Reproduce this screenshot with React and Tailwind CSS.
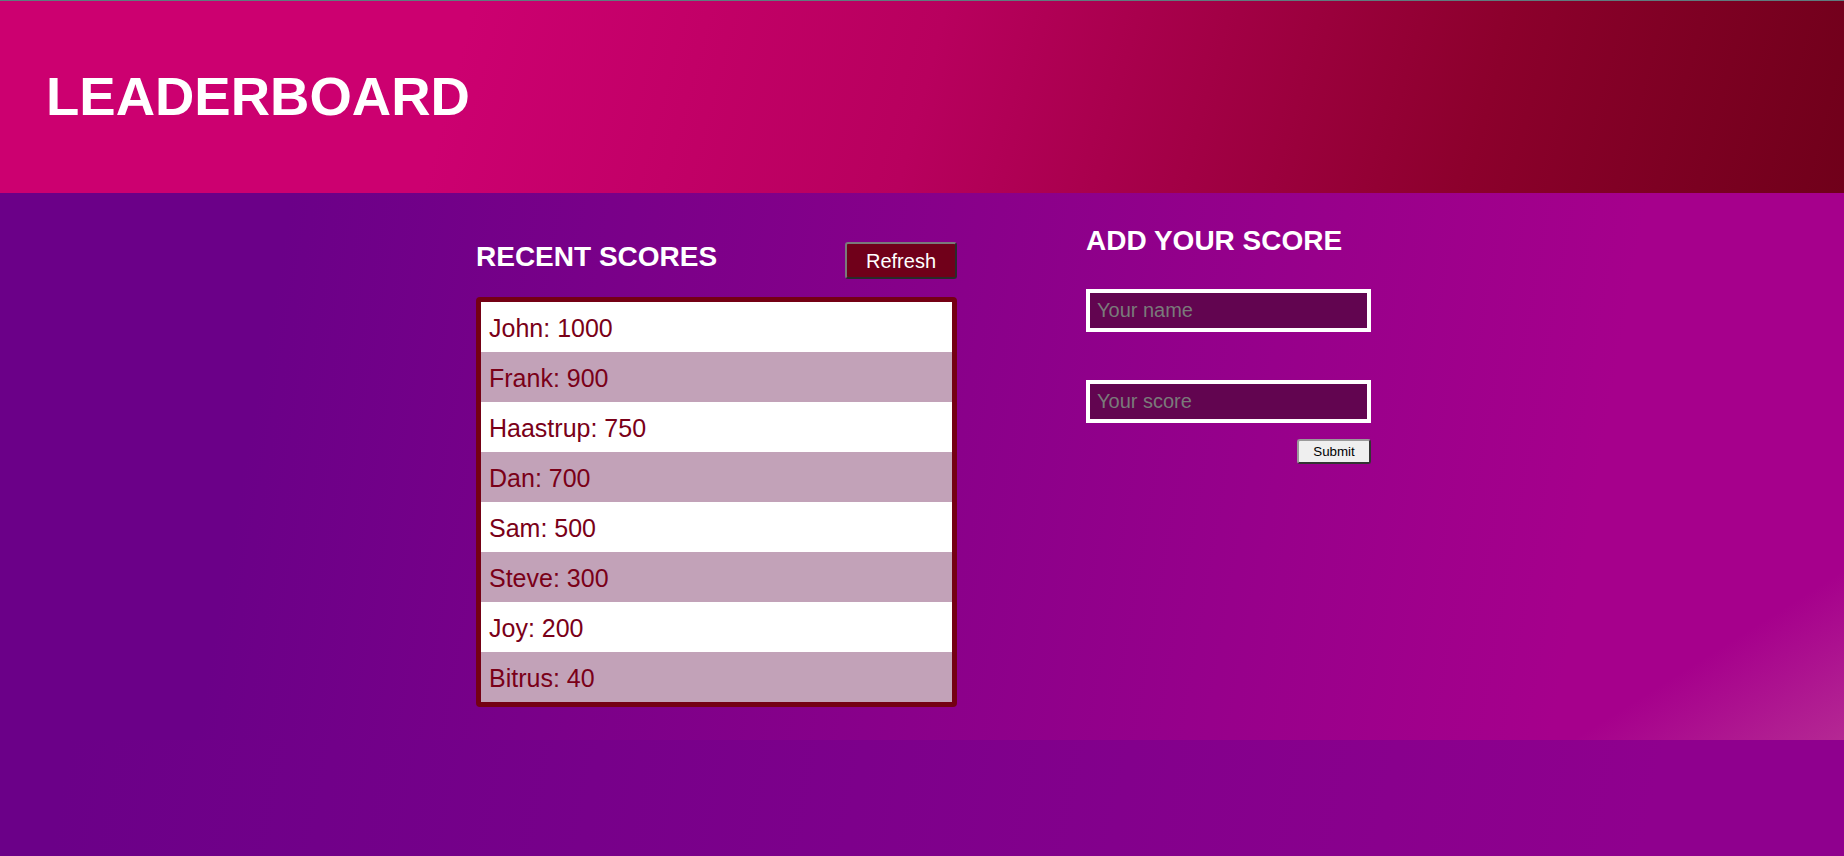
import React from "react";

const scores = [
  ["John", 1000],
  ["Frank", 900],
  ["Haastrup", 750],
  ["Dan", 700],
  ["Sam", 500],
  ["Steve", 300],
  ["Joy", 200],
  ["Bitrus", 40],
];

export default function App() {
  return (
    <div className="min-h-screen bg-[linear-gradient(100deg,#6b0088_10%,#8f008e_90%)] font-['Liberation_Sans',Arial,sans-serif]">
      <header className="h-[193px] border-t border-[#5f7b7e] bg-[linear-gradient(105deg,#cc0070_25%,#b8005e_50%,#8c002c_80%,#70001a)] flex items-center pl-[46px]">
        <h1 className="font-bold text-[54.5px] leading-none text-white">
          LEADERBOARD
        </h1>
      </header>

      <main className="h-[547px] pl-[3px] bg-[linear-gradient(148deg,transparent_90%,rgba(195,80,155,0.5)_100%),linear-gradient(100deg,#6b0088_15%,#a6008c_85%)] flex justify-center gap-[129px]">
        <section className="w-[481px] pt-[48px]">
          <div className="flex items-start justify-between">
            <h2 className="text-[28px] leading-[32px] font-bold text-white">RECENT SCORES</h2>
            <button className="mt-px w-[112px] h-[37px] bg-[#70001a] text-white text-[20px] rounded-[3px] border-2 border-t-[#7a7a7a] border-l-[#7a7a7a] border-b-[#2a2a2a] border-r-[#2a2a2a]">
              Refresh
            </button>
          </div>
          <ul className="mt-[18px] border-[5px] border-[#740014] rounded-[4px] bg-white">
            {scores.map(([name, score], i) => (
              <li
                key={name}
                className={
                  "h-[50px] flex items-center pl-[8px] pt-[3px] text-[25px] text-[#7a0018] " +
                  (i % 2 === 1 ? "bg-[#c2a2b8]" : "bg-white")
                }
              >
                {name}: {score}
              </li>
            ))}
          </ul>
        </section>

        <section className="w-[285px] pt-[32px]">
          <h2 className="text-[28px] leading-[32px] font-bold text-white">ADD YOUR SCORE</h2>
          <input
            placeholder="Your name"
            className="mt-[32px] block w-[285px] h-[43px] border-4 border-white bg-[#620550] px-[7px] text-[20px] text-white placeholder:text-[#7a7a7a] outline-none"
          />
          <input
            placeholder="Your score"
            className="mt-[48px] block w-[285px] h-[43px] border-4 border-white bg-[#620550] px-[7px] text-[20px] text-white placeholder:text-[#7a7a7a] outline-none"
          />
          <div className="flex justify-end mt-[16px]">
            <button className="w-[74px] h-[25px] bg-[#efefef] text-black text-[13.33px] rounded-[3px] border-2 border-t-[#9a9a9a] border-l-[#9a9a9a] border-b-[#333] border-r-[#333]">
              Submit
            </button>
          </div>
        </section>
      </main>
    </div>
  );
}
